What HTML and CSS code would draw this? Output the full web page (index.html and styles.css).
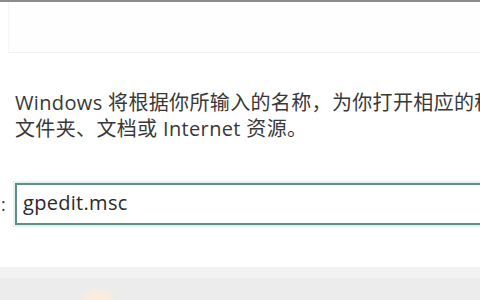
FILE: index.html
```html
<!DOCTYPE html>
<html lang="zh-CN">

<head>
  <meta charset="utf-8">
  <meta name="viewport" content="width=device-width, initial-scale=1.0">
  <link rel="stylesheet" href="styles.css">
</head>

<body>

  <div class="dialog">
    <div class="title-bar"></div>

    <div class="body">
      <p class="desc">Windows 将根据你所输入的名称，为你打开相应的程序、<br>文件夹、文档或 Internet 资源。</p>

      <div class="field">
        <span class="label">:</span>
        <div class="input">gpedit.msc</div>
      </div>
    </div>

    <div class="footer">
      <span class="glow"></span>
    </div>
  </div>

</body>

</html>
```

FILE: styles.css
```css
html,
body {
  margin: 0;
  padding: 0;
  width: 100%;
  height: 100%;
  background: #fff;
  overflow: hidden;
  font-family: "Open Sans", "Noto Sans CJK SC", sans-serif;
  color: #383838;
}

.dialog {
  width: 480px;
  height: 300px;
  display: flex;
  flex-direction: column;
  border-top: 2px solid #8c8c8c;
  box-sizing: border-box;
  overflow: hidden;
}

/* blank caption strip */
.title-bar {
  height: 50px;
  margin-left: 8px;
  border-left: 1px solid #f6f6f6;
  border-bottom: 1px solid #f1f1f1;
  background: #fefefe;
}

.body {
  flex: 1;
  padding-left: 15px;
}

.desc {
  margin: 37px 0 0;
  font-size: 20px;
  line-height: 26px;
  white-space: nowrap;
  letter-spacing: 0.35px;
}

.field {
  display: flex;
  align-items: center;
  margin-top: 41px;
  margin-left: -15px;
}

.label {
  width: 15px;
  font-size: 18px;
  padding-left: 1px;
  box-sizing: border-box;
}

.input {
  flex: 1;
  height: 38px;
  border: 2px solid #5f8f85;
  border-right: none;
  box-shadow: 0 0 0 2px #e3f5f1;
  padding-left: 6px;
  font-size: 20px;
  line-height: 36px;
  letter-spacing: 0.3px;
  color: #2a2a2a;
}

.footer {
  height: 33px;
  background: linear-gradient(#f2f2f2 0, #f2f2f2 11px, #ececec 11px);
  position: relative;
}

.glow {
  position: absolute;
  left: 84px;
  top: 22px;
  width: 28px;
  height: 18px;
  border-radius: 50%;
  background: #fcecdf;
  filter: blur(3px);
}
```
